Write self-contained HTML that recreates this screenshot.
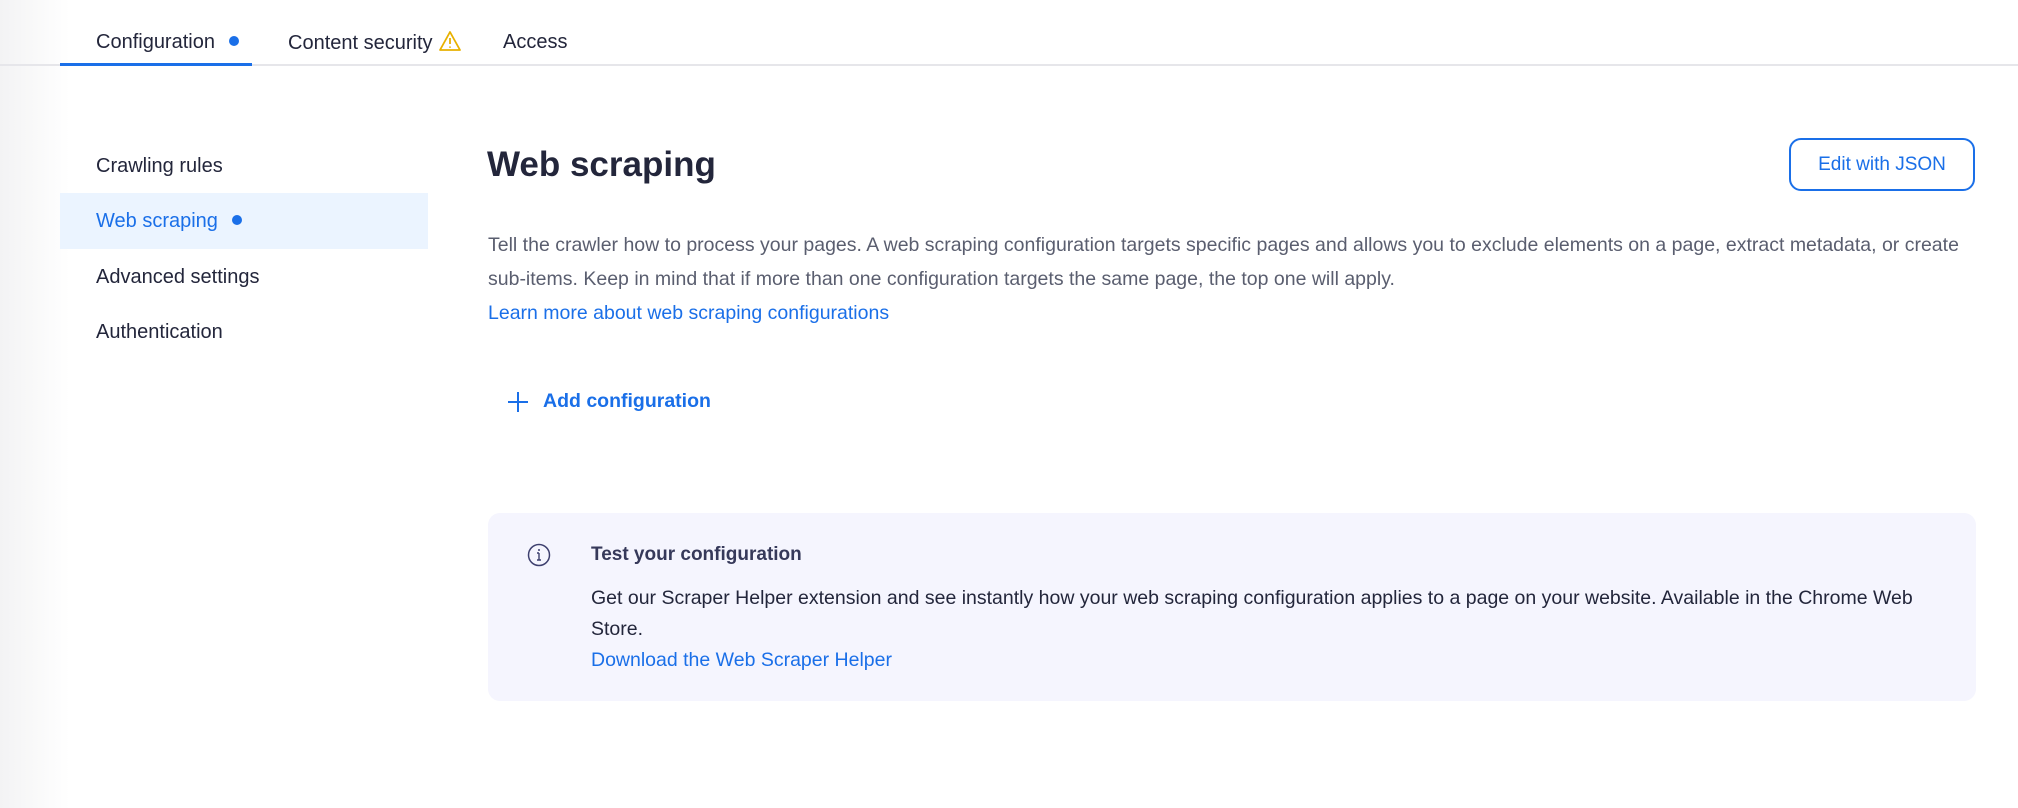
<!DOCTYPE html>
<html><head><style>
body{margin:0;width:2018px;height:808px;background:#fff;font-family:"Liberation Sans",sans-serif;position:relative;overflow:hidden;color:#23263b}
.sh{position:absolute;left:0;top:0;width:70px;height:808px;background:linear-gradient(90deg,#f3f3f4,#fff)}
.t{position:absolute;white-space:nowrap}
.dot{display:inline-block;width:10px;height:10px;border-radius:50%;background:#1a6fe8;vertical-align:middle;margin-left:14px;position:relative;top:-2px}
</style></head><body>
<div class="sh"></div>
<div style="position:absolute;left:0;top:64px;width:2018px;height:2px;background:#e6e6ea"></div>
<div style="position:absolute;left:60px;top:63px;width:192px;height:3px;background:#1a6fe8"></div>
<div class="t" style="left:96px;top:31px;font-size:20px">Configuration<span class="dot"></span></div>
<div class="t" style="left:288px;top:30px;font-size:20px">Content security <svg width="24" height="22" viewBox="0 0 24 22" style="vertical-align:-3px"><path d="M12 2 L22 20 H2 Z" fill="none" stroke="#e8b100" stroke-width="1.8" stroke-linejoin="round"/><path d="M12 8v6M12 16.5v1.2" stroke="#e8b100" stroke-width="1.8"/></svg></div>
<div class="t" style="left:503px;top:31px;font-size:20px">Access</div>

<div class="t" style="left:96px;top:155px;font-size:20px">Crawling rules</div>
<div style="position:absolute;left:60px;top:193px;width:368px;height:56px;background:#ebf4ff"></div>
<div class="t" style="left:96px;top:210px;font-size:20px;color:#1a6fe8">Web scraping<span class="dot"></span></div>
<div class="t" style="left:96px;top:266px;font-size:20px">Advanced settings</div>
<div class="t" style="left:96px;top:321px;font-size:20px">Authentication</div>

<div class="t" style="left:487px;top:145px;font-size:35px;font-weight:bold">Web scraping</div>
<div style="position:absolute;left:1789px;top:138px;width:186px;height:53px;border:2px solid #1a6fe8;border-radius:12px;box-sizing:border-box;color:#1a6fe8;font-size:19px;text-align:center;line-height:49px">Edit with JSON</div>

<div style="position:absolute;left:488px;top:228px;width:1480px;font-size:19.5px;line-height:34px;color:#5a5e6f">Tell the crawler how to process your pages. A web scraping configuration targets specific pages and allows you to exclude elements on a page, extract metadata, or create sub-items. Keep in mind that if more than one configuration targets the same page, the top one will apply.<br><span style="color:#1a6fe8">Learn more about web scraping configurations</span></div>

<svg style="position:absolute;left:507px;top:391px" width="22" height="22"><path d="M11 1v20M1 11h20" stroke="#1a6fe8" stroke-width="2"/></svg>
<div class="t" style="left:543px;top:390px;font-size:19.5px;font-weight:bold;color:#1a6fe8">Add configuration</div>

<div style="position:absolute;left:488px;top:513px;width:1488px;height:188px;background:#f5f5fe;border-radius:12px"></div>
<svg style="position:absolute;left:527px;top:543px" width="24" height="24"><circle cx="12" cy="12" r="10.5" fill="none" stroke="#3d3f6e" stroke-width="1.5"/><path d="M12 10v7M10 17h4M10 10h2" stroke="#3d3f6e" stroke-width="1.4"/><circle cx="12" cy="7" r="1" fill="#3d3f6e"/></svg>
<div class="t" style="left:591px;top:544px;font-size:19px;font-weight:bold;color:#36395a">Test your configuration</div>
<div style="position:absolute;left:591px;top:583px;width:1340px;font-size:19.5px;line-height:31px;color:#23263b">Get our Scraper Helper extension and see instantly how your web scraping configuration applies to a page on your website. Available in the Chrome Web Store.<br><span style="color:#1a6fe8">Download the Web Scraper Helper</span></div>
</body></html>
